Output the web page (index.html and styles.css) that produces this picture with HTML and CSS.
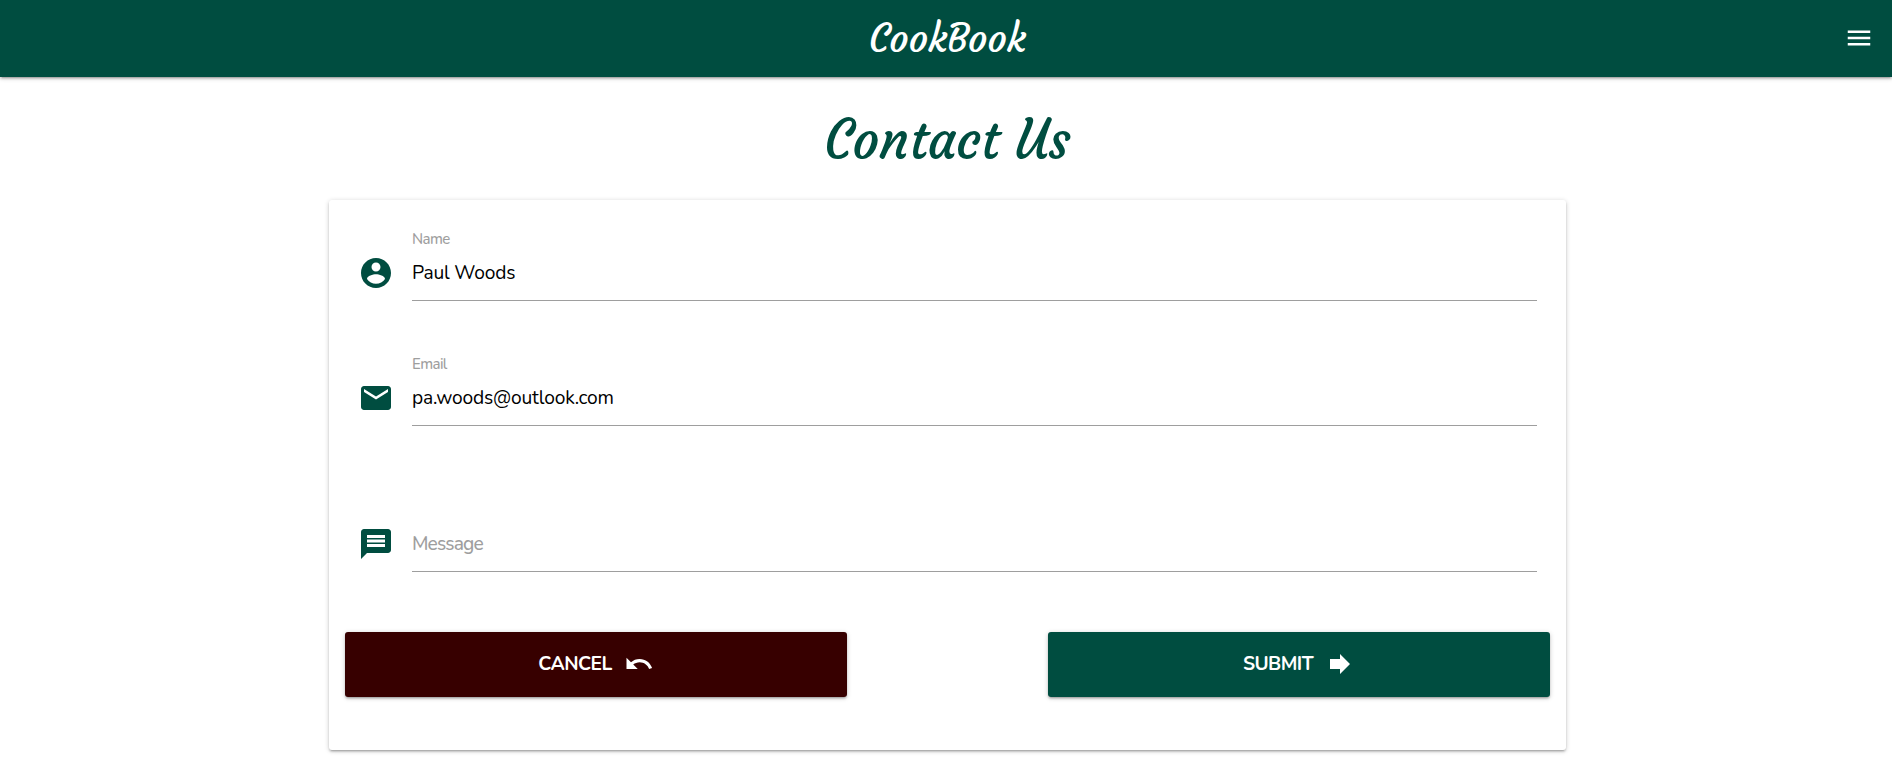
FILE: index.html
```
<!DOCTYPE html>
<html lang="en">
<head>
<meta charset="utf-8">
<title>CookBook - Contact Us</title>
<link rel="stylesheet" href="styles.css">
</head>
<body>
<header class="navbar">
  <a class="brand" href="#">
    <svg class="brand-text" viewBox="0 0 160 40"><text x="1" y="33.5" textLength="157" lengthAdjust="spacingAndGlyphs">CookBook</text></svg>
  </a>
  <button class="menu-toggle" aria-label="Menu">
    <svg class="icon-small" viewBox="0 0 24 24"><path d="M3 18h18v-2H3v2zm0-5h18v-2H3v2zm0-7v2h18V6H3z"/></svg>
  </button>
</header>
<main class="page">
  <h1 class="title">
    <svg class="title-text" viewBox="0 0 250 70"><text x="0.5" y="51" textLength="246" lengthAdjust="spacingAndGlyphs">Contact Us</text></svg>
  </h1>
  <form class="card">
    <div class="field">
      <svg class="icon" viewBox="0 0 24 24"><path d="M12 2C6.48 2 2 6.48 2 12s4.48 10 10 10 10-4.48 10-10S17.52 2 12 2zm0 3c1.66 0 3 1.34 3 3s-1.34 3-3 3-3-1.34-3-3 1.34-3 3-3zm0 14.2c-2.5 0-4.71-1.28-6-3.22.03-1.99 4-3.08 6-3.08 1.99 0 5.97 1.09 6 3.08-1.29 1.94-3.5 3.22-6 3.22z"/></svg>
      <div class="control">
        <label class="label" for="name">Name</label>
        <input class="input input-name" id="name" type="text" value="Paul Woods">
      </div>
    </div>
    <div class="field">
      <svg class="icon" viewBox="0 0 24 24"><path d="M20 4H4c-1.1 0-1.99.9-1.99 2L2 18c0 1.1.9 2 2 2h16c1.1 0 2-.9 2-2V6c0-1.1-.9-2-2-2zm0 4l-8 5-8-5V6l8 5 8-5v2z"/></svg>
      <div class="control">
        <label class="label" for="email">Email</label>
        <input class="input input-email" id="email" type="text" value="pa.woods@outlook.com">
      </div>
    </div>
    <div class="field field-message">
      <svg class="icon" viewBox="0 0 24 24"><path d="M20 2H4c-1.1 0-1.99.9-1.99 2L2 22l4-4h14c1.1 0 2-.9 2-2V4c0-1.1-.9-2-2-2zM18 14H6v-2h12v2zm0-3H6V9h12v2zm0-3H6V6h12v2z"/></svg>
      <div class="control">
        <input class="input input-message" id="message" type="text" placeholder="Message" aria-label="Message">
      </div>
    </div>
    <div class="actions">
      <button class="btn btn-cancel" type="button"><span>CANCEL</span>
        <svg class="icon-small" viewBox="0 0 24 24"><path d="M12.5 8c-2.65 0-5.05.99-6.9 2.6L2 7v9h9l-3.62-3.62c1.39-1.16 3.16-1.88 5.12-1.88 3.54 0 6.55 2.31 7.6 5.5l2.37-.78C21.08 11.03 17.15 8 12.5 8z"/></svg>
      </button>
      <button class="btn btn-submit" type="button"><span>SUBMIT</span>
        <svg class="icon-small" viewBox="0 0 24 24"><path d="M12 8V4l8 8-8 8v-4H4V8z"/></svg>
      </button>
    </div>
  </form>
</main>
</body>
</html>
```
FILE: styles.css
```
* { box-sizing: border-box; }
body {
  margin: 0;
  min-height: 779px;
  background: #fff;
  font-family: Nunito, Lato, sans-serif;
  font-size: 19.2px;
}
svg { display: block; flex: none; overflow: visible; fill: currentColor; }
.navbar {
  display: grid;
  grid-template-columns: 1fr 160px 1fr;
  align-items: center;
  height: 77px;
  padding: 0 18px 2px 21px;
  background: #004d40;
  color: #fff;
  box-shadow: 0 2px 2px 0 rgba(0,0,0,.14), 0 3px 1px -2px rgba(0,0,0,.12), 0 1px 5px 0 rgba(0,0,0,.2);
}
.brand { grid-column: 2; color: #fff; text-decoration: none; }
.brand-text, .title-text {
  font-family: Courgette, Lato, sans-serif;
  font-weight: 400;
}
.brand-text { width: 160px; height: 40px; font-size: 38.4px; }
.menu-toggle {
  justify-self: end;
  padding: 0;
  border: 0;
  background: none;
  color: #fff;
}
.icon-small { width: 30px; height: 30px; }
.page { width: 1237px; margin: 0 326px 0 329px; }
.title { margin: 0; padding-top: 31px; height: 123px; color: #004d40; }
.title-text { width: 250px; height: 70px; margin-left: 495px; font-size: 55px; }
.card {
  height: 550px;
  padding: 32px 16px 0;
  border-radius: 3px;
  box-shadow: 0 2px 2px 0 rgba(0,0,0,.14), 0 3px 1px -2px rgba(0,0,0,.12), 0 1px 5px 0 rgba(0,0,0,.2);
}
.field {
  display: flex;
  align-items: flex-end;
  gap: 17.6px;
  height: 69px;
  margin: 0 13px 56px 13.4px;
}
.icon { width: 36px; height: 36px; margin-bottom: 10px; color: #004d40; }
.control { flex: 1; display: flex; flex-direction: column; }
.label {
  height: 14px;
  font-size: 15px;
  font-weight: 500;
  line-height: 15px;
  letter-spacing: -.6px;
  color: #9e9e9e;
}
.input {
  width: 100%;
  height: 55px;
  padding: 0 0 1px;
  border: 0;
  border-bottom: 1px solid #9e9e9e;
  outline: 0;
  background: transparent;
  color: #000;
  font: inherit;
  letter-spacing: -.18px;
}
.input::placeholder { color: #9e9e9e; opacity: 1; font-weight: 500; letter-spacing: -.9px; }
.input-message { padding-bottom: 0; }
.field-message { margin-top: 77px; margin-bottom: 60px; }
.actions { display: flex; justify-content: space-between; }
.btn {
  display: flex;
  align-items: center;
  justify-content: center;
  gap: 12px;
  width: 502px;
  height: 65px;
  padding: 0 0 1px;
  border: 0;
  border-radius: 3px;
  color: #fff;
  font: inherit;
  font-weight: 700;
  letter-spacing: -.55px;
  box-shadow: 0 2px 2px 0 rgba(0,0,0,.14), 0 3px 1px -2px rgba(0,0,0,.12), 0 1px 5px 0 rgba(0,0,0,.2);
}
.btn-cancel { background: #370000; }
.btn-submit { background: #004d40; }
```
